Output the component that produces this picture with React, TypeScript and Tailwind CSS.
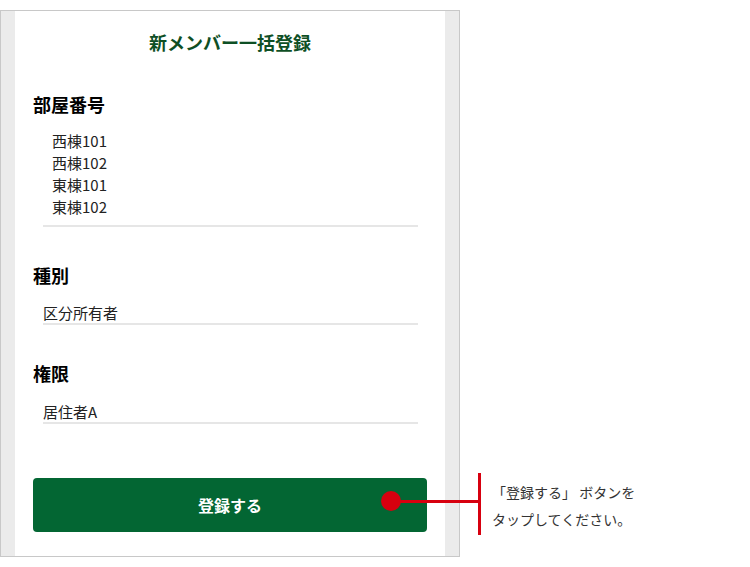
import React from "react";

const font = { fontFamily: '"Noto Sans CJK JP", "Noto Sans", sans-serif' };

type FieldProps = {
  label: string;
  gap: string;
  children: React.ReactNode;
};

function Field({ label, gap, children }: FieldProps) {
  return (
    <div>
      <p className="pl-[18px] text-[18px] font-bold leading-[26px] text-black">{label}</p>
      <div className={`ml-[28px] w-[375px] border-b-2 border-[#e6e6e6] text-[15px] text-[#222] ${gap}`}>
        {children}
      </div>
    </div>
  );
}

const rooms = ["西棟101", "西棟102", "東棟101", "東棟102"];

export default function App() {
  return (
    <div className="relative h-[567px] w-[750px] bg-white" style={font}>
      <div className="pt-[10px]">
        <div className="flex h-[547px] w-[460px] border border-[#c8c8c8]">
          <div className="w-[14px] bg-[#ebebeb]" />
          <div className="flex w-[430px] flex-col bg-white">
            <h1 className="pt-[18px] text-center text-[18px] font-bold leading-[26px] text-[#0e4f25]">
              新メンバー一括登録
            </h1>

            <div className="mt-[36px]">
              <Field label="部屋番号" gap="mt-[13px] pb-[7px] pl-[9px] leading-[22px]">
                {rooms.map((r) => (
                  <p key={r}>{r}</p>
                ))}
              </Field>
            </div>

            <div className="mt-[35px]">
              <Field label="種別" gap="mt-[15px] leading-[20px]">
                区分所有者
              </Field>
            </div>

            <div className="mt-[35px]">
              <Field label="権限" gap="mt-[16px] leading-[20px]">
                居住者A
              </Field>
            </div>

            <button className="ml-[18px] mt-[54px] flex h-[54px] w-[394px] items-center justify-center rounded-[4px] bg-[#036633] text-[16px] font-bold text-white">
              登録する
            </button>
          </div>
          <div className="w-[14px] bg-[#ebebeb]" />
        </div>
      </div>

      {/* annotation */}
      <div className="absolute left-[381px] top-[491px] h-[20px] w-[20px] rounded-full bg-[#d7000f]" />
      <div className="absolute left-[391px] top-[500px] h-[3px] w-[90px] bg-[#d7000f]" />
      <div className="absolute left-[478px] top-[473px] h-[62px] w-[3px] bg-[#d7000f]" />
      <div className="absolute left-[492px] top-[479px] text-[14px] leading-[27px] text-[#333]">
        <p>「登録する」 ボタンを</p>
        <p>タップしてください。</p>
      </div>
    </div>
  );
}
